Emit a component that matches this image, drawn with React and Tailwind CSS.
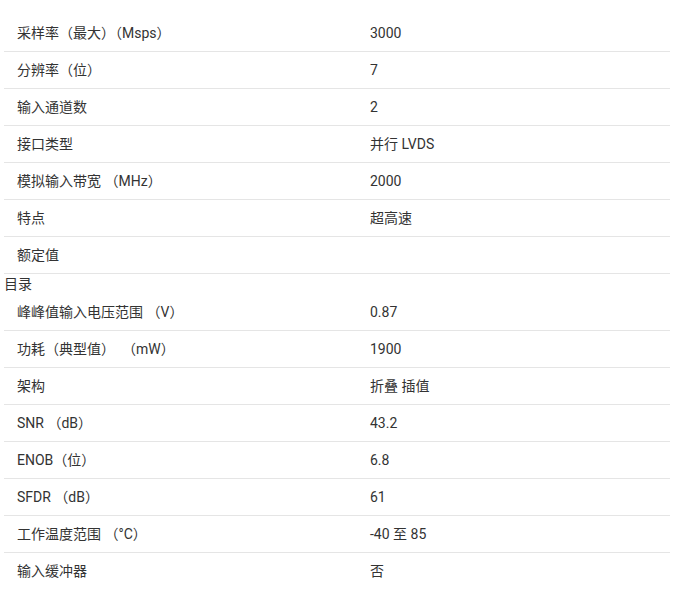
import React from 'react';

const topRows = [
    ['采样率（最大）（Msps）', '3000'],
    ['分辨率（位）', '7'],
    ['输入通道数', '2'],
    ['接口类型', '并行 LVDS'],
    ['模拟输入带宽 （MHz）', '2000'],
    ['特点', '超高速'],
    ['额定值', ''],
];

const bottomRows = [
    ['峰峰值输入电压范围 （V）', '0.87'],
    ['功耗（典型值）\u00a0\u00a0（mW）', '1900'],
    ['架构', '折叠 插值'],
    ['SNR （dB）', '43.2'],
    ['ENOB（位）', '6.8'],
    ['SFDR （dB）', '61'],
    ['工作温度范围 （°C）', '-40 至 85'],
    ['输入缓冲器', '否'],
];

const Row = ({ label, value }) => (
    <div className="grid grid-cols-[353px_1fr] border-b border-[#e5e5e5]">
        <div className="pl-[13px] py-2 leading-5">{label}</div>
        <div className="pl-[13px] py-2 leading-5">{value}</div>
    </div>
);

const App = () => {
    return (
        <div
            className="min-h-screen bg-white text-[14px] text-[#333] pt-[15px] px-1"
            style={{ fontFamily: 'Roboto, "Noto Sans CJK SC", sans-serif' }}
        >
            {topRows.map(([label, value]) => (
                <Row key={label} label={label} value={value} />
            ))}
            <div className="leading-5">目录</div>
            {bottomRows.map(([label, value]) => (
                <Row key={label} label={label} value={value} />
            ))}
        </div>
    );
};

export default App;
